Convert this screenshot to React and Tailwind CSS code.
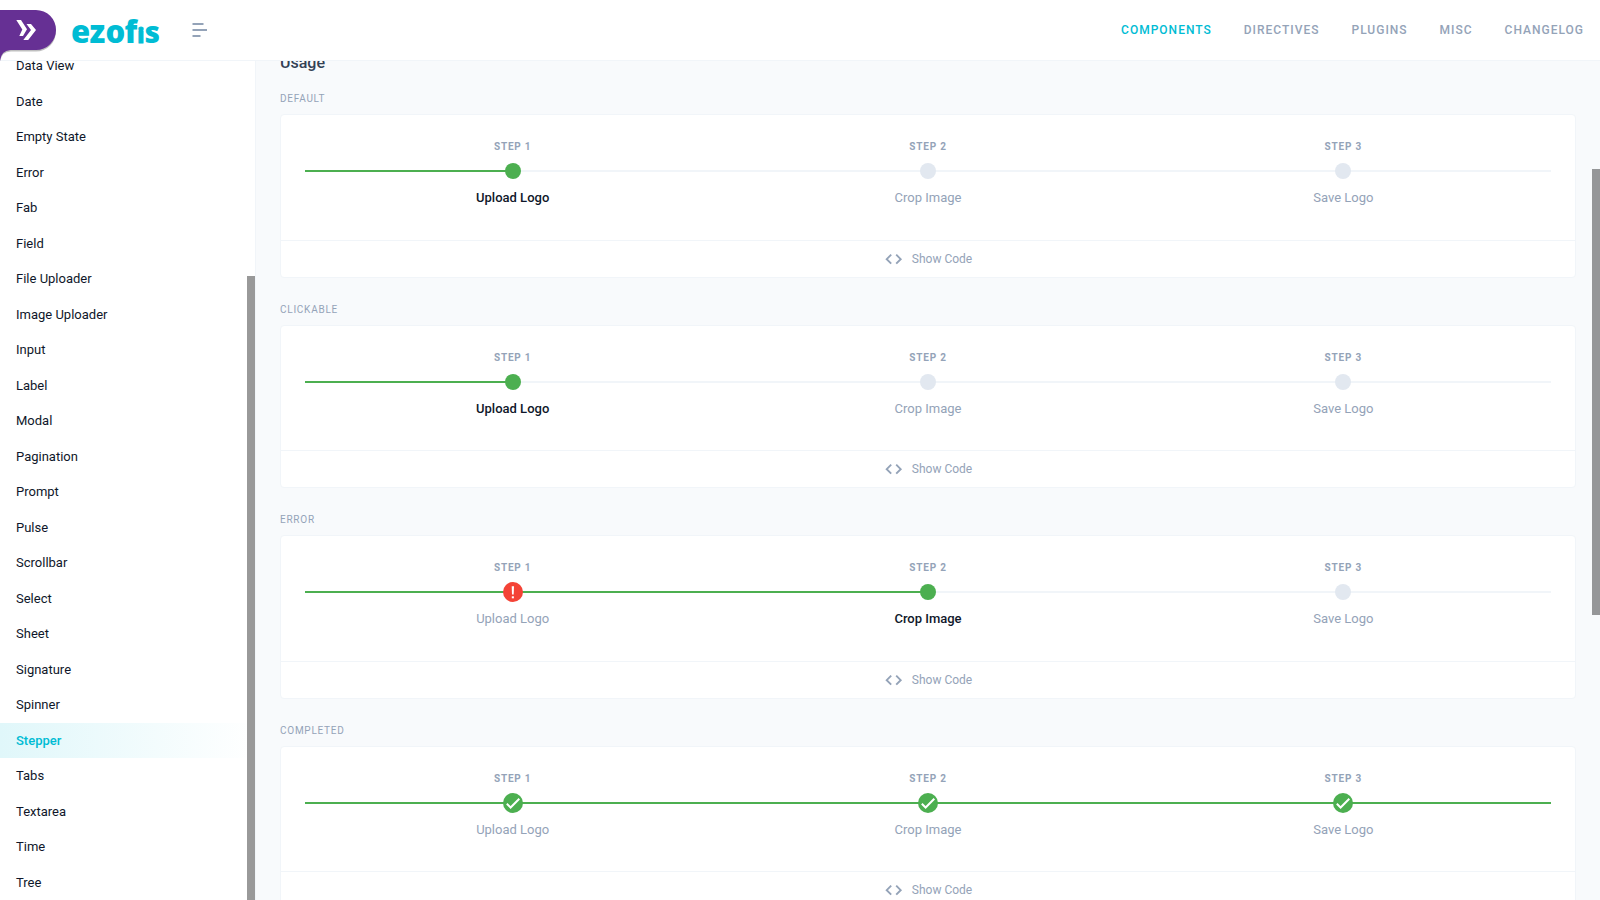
const items = ['Data View','Date','Empty State','Error','Fab','Field','File Uploader','Image Uploader','Input','Label','Modal','Pagination','Prompt','Pulse','Scrollbar','Select','Sheet','Signature','Spinner','Stepper','Tabs','Textarea','Time','Tree'];
const nav = ['Components', 'Directives', 'Plugins', 'Misc', 'Changelog'];
const titles = ['Upload Logo', 'Crop Image', 'Save Logo'];
const sections = [
  { name: 'Default', steps: ['active', 'idle', 'idle'] },
  { name: 'Clickable', steps: ['active', 'idle', 'idle'] },
  { name: 'Error', steps: ['error', 'active', 'idle'] },
  { name: 'Completed', steps: ['done', 'done', 'done'] },
];

function Marker({ state }) {
  if (state === 'error')
    return (
      <svg className="relative size-5" viewBox="0 0 20 20">
        <circle cx="10" cy="10" r="10" fill="#f44336" />
        <path d="M8.700 4.200h2.300l-.3 8.300H9z" fill="#fff" />
        <rect x="8.800" y="14.300" width="2.100" height="2" fill="#fff" />
      </svg>
    );
  if (state === 'done')
    return (
      <svg className="relative size-5" viewBox="0 0 20 20">
        <circle cx="10" cy="10" r="10" fill="#4caf50" />
        <path d="M3.800 10.800 7.600 14.500 16.300 5.800" fill="none" stroke="#fff" strokeWidth="2" />
      </svg>
    );
  return <span className={state === 'active' ? 'relative size-4 rounded-full bg-[#4caf50]' : 'relative size-4 rounded-full bg-[#e2e8f0]'} />;
}

const green = 'h-0.5 flex-1 bg-[#4caf50]';
const gray = 'h-0.5 flex-1 bg-[#f1f5f9]';

function Step({ n, state, next }) {
  return (
    <div className="flex flex-1 flex-col items-center">
      <div className="h-[15px] text-[10px] leading-[15px] font-bold tracking-[0.800px] text-[#94a3b8]">STEP {n}</div>
      <div className="mt-[7px] grid h-5 w-full place-items-center">
        <div className="col-start-1 row-start-1 flex w-full">
          <span className={state === 'idle' ? gray : green} />
          <span className={state === 'done' || (next && next !== 'idle') ? green : gray} />
        </div>
        <div className="col-start-1 row-start-1 flex"><Marker state={state} /></div>
      </div>
      <div className={state === 'active' ? 'mt-[7px] text-[13px] leading-5 font-medium text-[#0f172a]' : 'mt-[7px] text-[13px] leading-5 text-[#94a3b8]'}>{titles[n - 1]}</div>
    </div>
  );
}

function Section({ name, steps }) {
  return (
    <section className="h-[210.600px] shrink-0">
      <h3 className="h-[23.300px] text-[10px] leading-[15px] tracking-[0.750px] text-[#94a3b8] uppercase">{name}</h3>
      <div className="h-[163.500px] rounded border border-[#f1f5f9] bg-white">
        <div className="flex h-[124.300px] px-6 pt-6">
          {steps.map((s, i) => <Step key={i} n={i + 1} state={s} next={steps[i + 1]} />)}
        </div>
        <div className="flex h-[37.200px] items-center justify-center border-t border-[#f1f5f9] text-[#94a3b8]">
          <svg className="mr-2 h-5 w-5" viewBox="0 0 20 20" fill="none" stroke="currentColor" strokeWidth="1.900">
            <path d="M7.200 5.700 2.700 10.200l4.500 4.500M12.200 5.700l4.500 4.500-4.500 4.500" />
          </svg>
          <span className="text-[12px] leading-[18px]">Show Code</span>
        </div>
      </div>
    </section>
  );
}

export default function App() {
  return (
    <div className="relative flex h-[900px] w-[1600px] flex-col overflow-hidden bg-[#f8fafc] font-['Roboto',sans-serif]">
      <header className="flex h-[61px] shrink-0 items-center border-b border-[#f1f5f9] bg-white pr-4">
        <svg className="h-[61px] w-[60px]" viewBox="0 0 60 61">
          <path d="M0 10.500H35.500a20 20 0 0 1 0 40H10.500Q0 51 0 61z" fill="#000" opacity=".25" transform="translate(.5 1)" />
          <path d="M0 10H36a20 20 0 0 1 0 40H10.500Q1 50.500 0 61z" fill="#663094" />
          <path d="M16.300 20H21l6 9.300-4 6.700h-3.700l3-6.500z" fill="#fff" />
          <path d="M26.500 24H31l5 6-7.800 10h-4.900l7.700-10z" fill="#fff" />
        </svg>
        <svg className="ml-2 h-[61px] w-24 overflow-visible" viewBox="68 0 96 61">
          <text x="71 89.500 105.500 124.500" y="42.500" fill="#00bcd4" className="font-['Open_Sans',sans-serif] text-[31px] font-extrabold">
            ezof<tspan x="137.400" className="text-[20.500px]" stroke="#00bcd4" strokeWidth="1">i</tspan><tspan x="144.500" className="text-[30px]">s</tspan>
          </text>
        </svg>
        <svg className="ml-6 h-[61px] w-5" viewBox="188 0 20 61" fill="none" stroke="#94a3b8" strokeWidth="1.900">
          <path d="M192.500 24h11M192.500 30h14.500M192.500 36h8" />
        </svg>
        <nav className="ml-auto flex gap-8 text-[12px] font-medium tracking-[1px] text-[#94a3b8] uppercase">
          {nav.map((n, i) => <a key={n} className={i === 0 ? 'text-[#00bcd4]' : ''}>{n}</a>)}
        </nav>
      </header>
      <div className="flex min-h-0 flex-1">
        <aside className="w-64 shrink-0 overflow-hidden border-r border-[#f1f5f9] bg-white">
          <ul className="-mt-[13px]">
            {items.map((t) => (
              <li key={t} className={t === 'Stepper' ? 'flex h-[35.500px] items-center bg-linear-to-r from-[#e0f7fa] to-white pl-4 text-[13px] font-medium text-[#00bcd4]' : 'flex h-[35.500px] items-center pl-4 text-[13px] text-[#0f172a]'}>{t}</li>
            ))}
          </ul>
        </aside>
        <main className="flex-1 overflow-hidden pr-6 pl-6">
          <h2 className="-mt-[10px] h-[40px] text-[16px] leading-6 font-medium text-[#334155]">Usage</h2>
          {sections.map((s) => <Section key={s.name} {...s} />)}
        </main>
      </div>
      <div className="absolute top-[276px] left-[247px] h-[624px] w-2 bg-[#999]" />
      <div className="absolute top-[169px] left-[1592px] h-[446px] w-2 bg-[#959698]" />
    </div>
  );
}
